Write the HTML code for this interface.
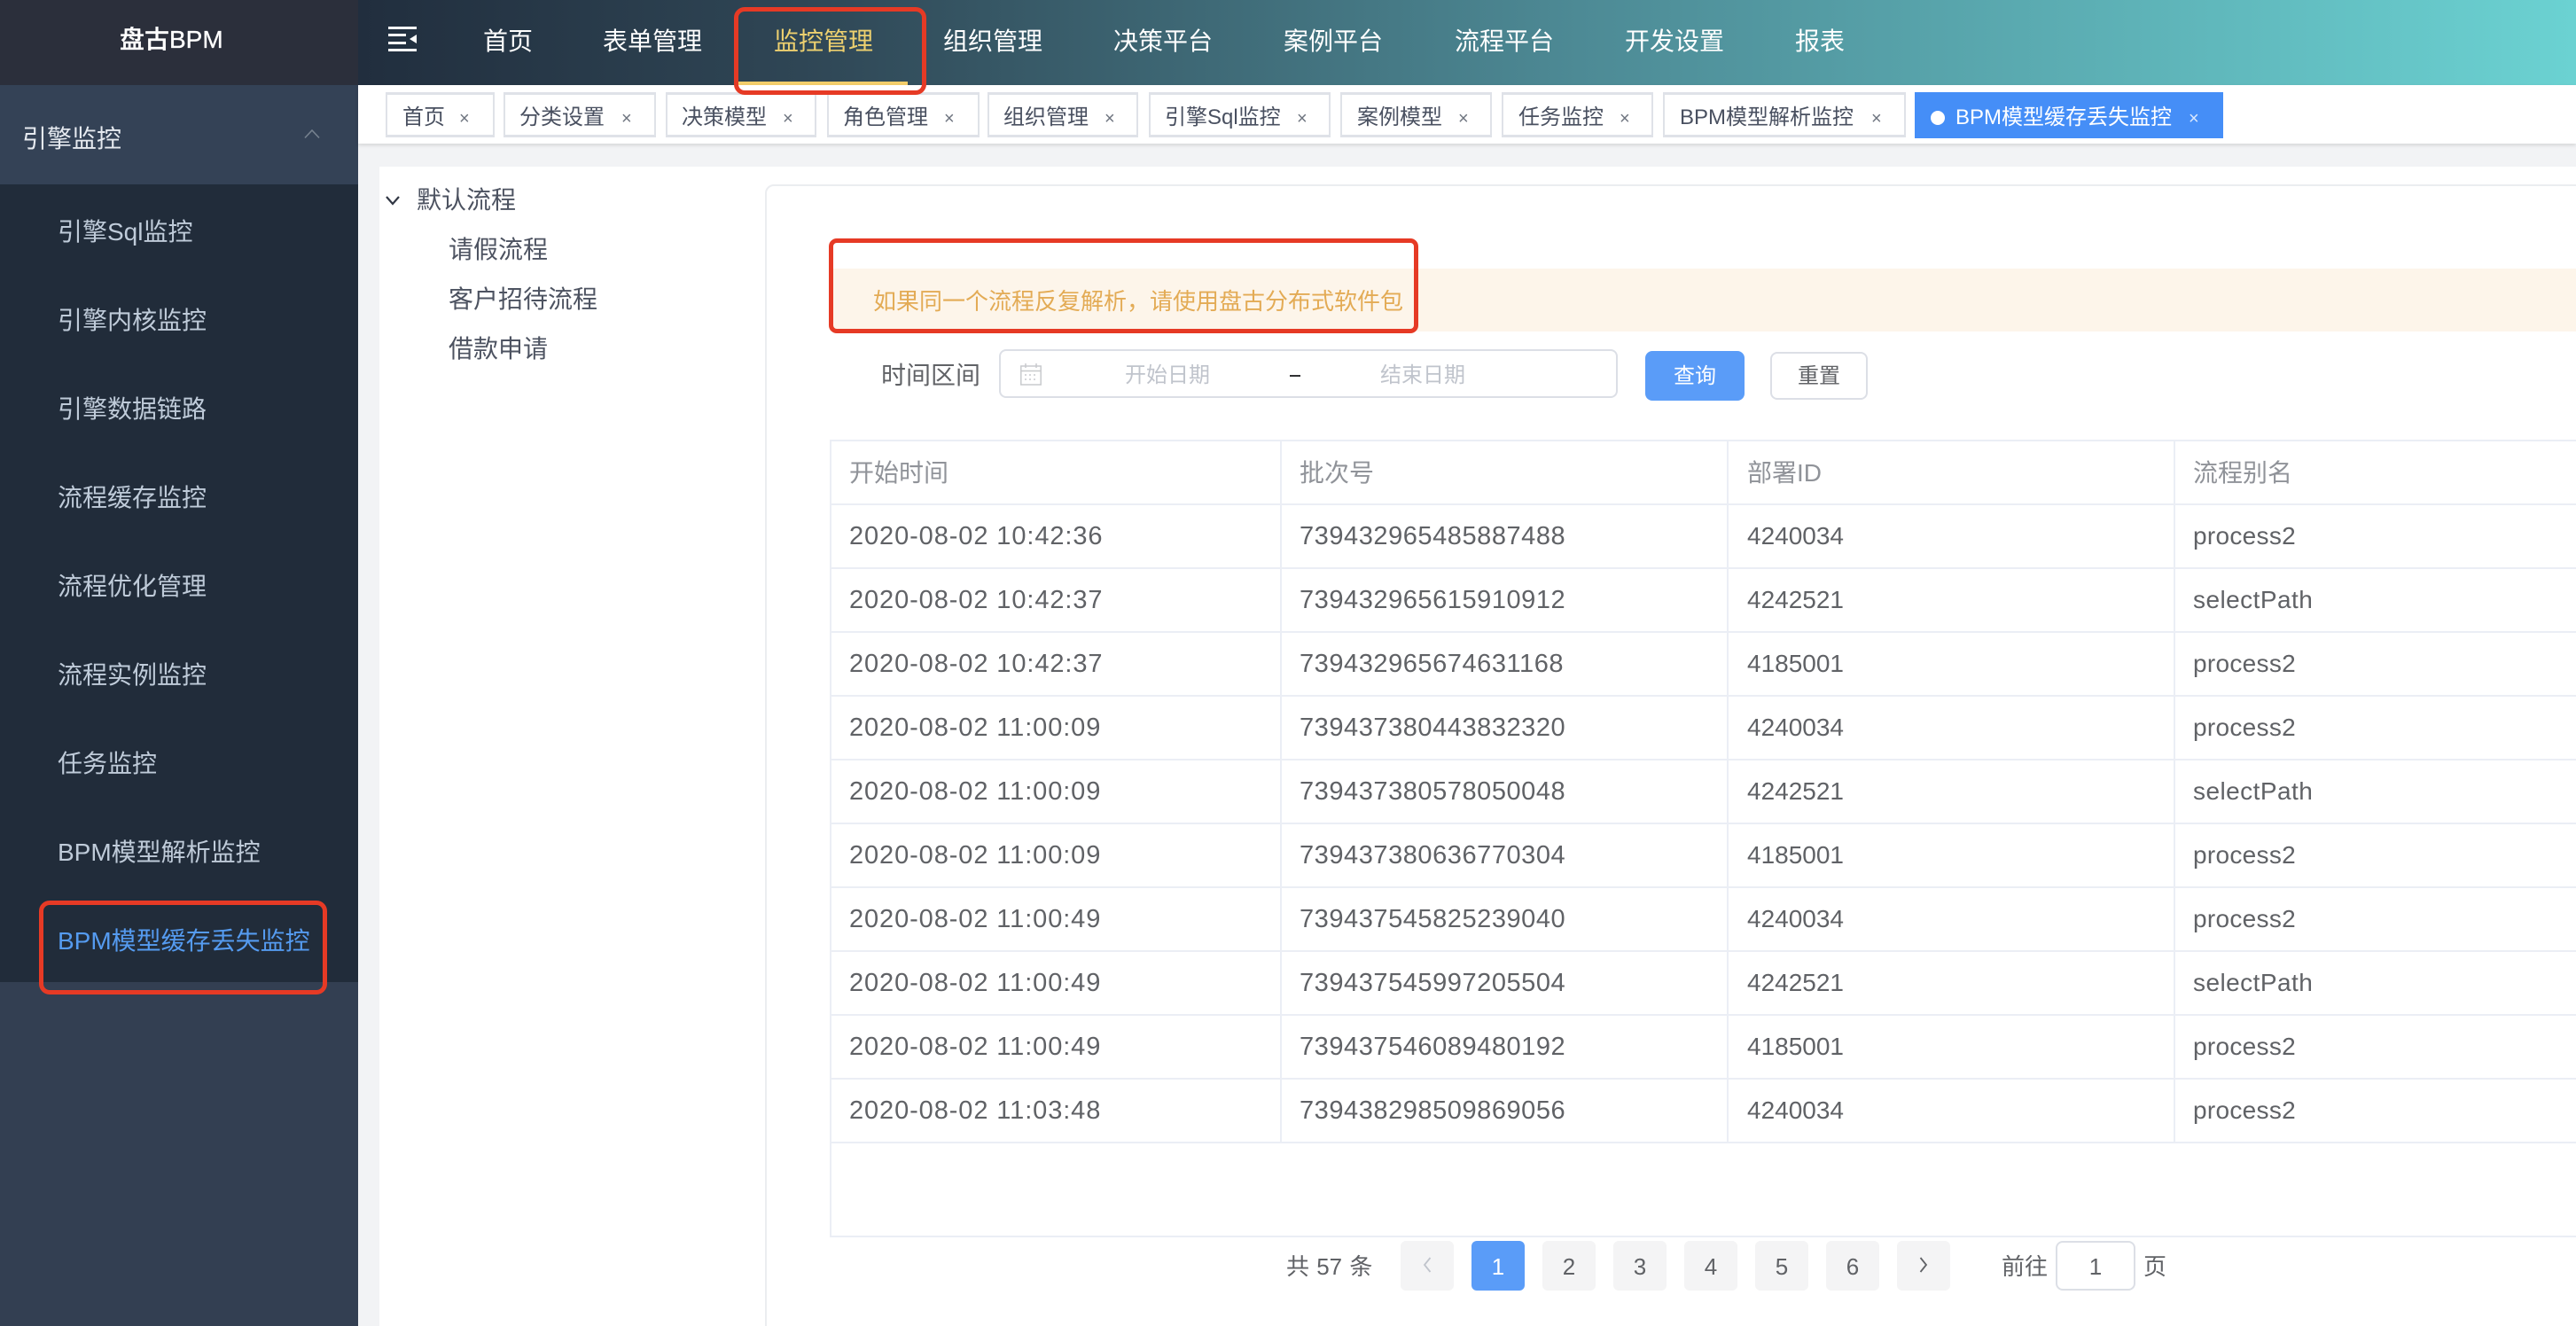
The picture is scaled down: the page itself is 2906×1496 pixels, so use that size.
<!DOCTYPE html>
<html lang="zh-CN"><head><meta charset="utf-8"><title>盘古BPM</title>
<style>
html,body{margin:0;padding:0;width:2906px;height:1496px;overflow:hidden;background:#fff}
body{position:relative;font-family:"Liberation Sans","Noto Sans CJK SC",sans-serif;color:#606266}
.a,.t,.tab,.red,.pg{position:absolute;box-sizing:border-box}
.t{white-space:nowrap;line-height:40px;height:40px;font-size:28px}
.nav{color:#fff;top:27px}
.mi{left:65px;color:#bfcbd9}
.tab{top:104px;height:51px;background:#fff;border:2px solid #dfe2e8;border-bottom-width:3px;border-top-width:3px}
.tt{font-size:24px;top:113px;color:#495060}
.x{font-size:20px;top:114px;color:#6f7580}
.tree{color:#4d5361}
.h{top:514px;color:#909399}
.hl{position:absolute;left:936px;width:1970px;height:2px;background:#ebeef5}
.vl{position:absolute;top:497px;width:2px;height:792px;background:#ebeef5}
.c1{left:958px;font-size:29px;letter-spacing:.9px}.c2{left:1466px;font-size:29px;letter-spacing:.55px}.c3{left:1971px}.c4{left:2474px;letter-spacing:.3px}
.pg{top:1400px;width:60px;height:56px;background:#f4f4f5;border-radius:6px;text-align:center;line-height:58px;font-size:26px;color:#606266}
.pg svg{display:block;margin:18px auto 0}
.red{border:5px solid #e63a25;border-radius:12px}
</style></head><body>

<!-- header -->
<div class="a" style="left:404px;top:0;width:2502px;height:96px;background:linear-gradient(90deg,#212e3e 0%,#2f4655 20%,#4d8a95 55%,#6bd2d2 100%)"></div>
<div class="a" style="left:0;top:0;width:404px;height:96px;background:#2b2f3b"></div>
<div class="t" style="left:135px;top:25px;color:#fff;font-weight:500;-webkit-text-stroke:.3px #fff">盘古BPM</div>
<svg class="a" style="left:438px;top:30px" width="32" height="28" viewBox="0 0 32 28"><path fill="#fff" d="M0 0h32v3H0zM0 8h20v3H0zM0 17h20v3H0zM0 25h32v3H0zM32 9v10l-8-5z"/></svg>
<div class="t nav" style="left:545px">首页</div>
<div class="t nav" style="left:680px">表单管理</div>
<div class="t nav" style="left:873px;color:#edd06f">监控管理</div>
<div class="a" style="left:833px;top:92px;width:191px;height:4px;background:#f3ce6b"></div>
<div class="t nav" style="left:1064px">组织管理</div>
<div class="t nav" style="left:1256px">决策平台</div>
<div class="t nav" style="left:1448px">案例平台</div>
<div class="t nav" style="left:1641px">流程平台</div>
<div class="t nav" style="left:1833px">开发设置</div>
<div class="t nav" style="left:2025px">报表</div>

<!-- sidebar -->
<div class="a" style="left:0;top:96px;width:404px;height:1400px;background:#333f52"></div>
<div class="a" style="left:0;top:96px;width:404px;height:112px;background:#344256"></div>
<div class="a" style="left:0;top:208px;width:404px;height:900px;background:#212c3a"></div>
<div class="t" style="left:25px;top:137px;color:#e6eaf0">引擎监控</div>
<svg class="a" style="left:343px;top:145px" width="18" height="12" viewBox="0 0 18 12"><path d="M1 10.500L9 2l8 8.500" fill="none" stroke="#76828f" stroke-width="1.600"/></svg>
<div class="t mi" style="top:242px">引擎Sql监控</div>
<div class="t mi" style="top:342px">引擎内核监控</div>
<div class="t mi" style="top:442px">引擎数据链路</div>
<div class="t mi" style="top:542px">流程缓存监控</div>
<div class="t mi" style="top:642px">流程优化管理</div>
<div class="t mi" style="top:742px">流程实例监控</div>
<div class="t mi" style="top:842px">任务监控</div>
<div class="t mi" style="top:942px">BPM模型解析监控</div>
<div class="t mi" style="top:1042px;color:#559bf0">BPM模型缓存丢失监控</div>

<!-- main background -->
<div class="a" style="left:404px;top:96px;width:2502px;height:1400px;background:#f2f3f5"></div>
<div class="a" style="left:404px;top:96px;width:2502px;height:66px;background:#fff;box-shadow:0 2px 4px rgba(0,0,0,.12)"></div>

<!-- tabs -->
<div class="tab" style="left:435px;width:123px"></div><div class="t tt" style="left:454px">首页</div><div class="t x" style="left:518px">×</div>
<div class="tab" style="left:568px;width:172px"></div><div class="t tt" style="left:586px">分类设置</div><div class="t x" style="left:701px">×</div>
<div class="tab" style="left:751px;width:170px"></div><div class="t tt" style="left:769px">决策模型</div><div class="t x" style="left:883px">×</div>
<div class="tab" style="left:933px;width:172px"></div><div class="t tt" style="left:951px">角色管理</div><div class="t x" style="left:1065px">×</div>
<div class="tab" style="left:1114px;width:170px"></div><div class="t tt" style="left:1132px">组织管理</div><div class="t x" style="left:1246px">×</div>
<div class="tab" style="left:1296px;width:205px"></div><div class="t tt" style="left:1314px">引擎Sql监控</div><div class="t x" style="left:1463px">×</div>
<div class="tab" style="left:1512px;width:171px"></div><div class="t tt" style="left:1531px">案例模型</div><div class="t x" style="left:1645px">×</div>
<div class="tab" style="left:1694px;width:171px"></div><div class="t tt" style="left:1713px">任务监控</div><div class="t x" style="left:1827px">×</div>
<div class="tab" style="left:1876px;width:274px"></div><div class="t tt" style="left:1895px">BPM模型解析监控</div><div class="t x" style="left:2111px">×</div>
<div class="a" style="left:2160px;top:104px;width:348px;height:52px;background:#458ef7"></div>
<div class="a" style="left:2178px;top:125px;width:16px;height:16px;border-radius:50%;background:#fff"></div>
<div class="t tt" style="left:2206px;color:#fff">BPM模型缓存丢失监控</div><div class="t x" style="left:2469px;color:#dbe8fd">×</div>

<!-- panel -->
<div class="a" style="left:428px;top:188px;width:2478px;height:1308px;background:#fff"></div>
<svg class="a" style="left:435px;top:220px" width="16" height="12" viewBox="0 0 16 12"><path d="M1 2l7 8 7-8" fill="none" stroke="#303643" stroke-width="2.200"/></svg>
<div class="t tree" style="left:470px;top:206px">默认流程</div>
<div class="t tree" style="left:506px;top:262px">请假流程</div>
<div class="t tree" style="left:506px;top:318px">客户招待流程</div>
<div class="t tree" style="left:506px;top:374px">借款申请</div>

<!-- card -->
<div class="a" style="left:863px;top:208px;width:2100px;height:1320px;border:2px solid #ebedf0;border-radius:10px"></div>
<div class="a" style="left:936px;top:303px;width:1970px;height:71px;background:#fdf5ea"></div>
<div class="t" style="left:985px;top:320px;font-size:26px;color:#e3ab55">如果同一个流程反复解析，请使用盘古分布式软件包</div>

<!-- filter -->
<div class="t" style="left:994px;top:404px">时间区间</div>
<div class="a" style="left:1127px;top:394px;width:698px;height:55px;border:2px solid #dcdfe6;border-radius:8px;background:#fff"></div>
<svg class="a" style="left:1151px;top:409px" width="24" height="26" viewBox="0 0 24 26"><g fill="none" stroke="#c8cacd" stroke-width="1.500"><rect x=".8" y="4" width="22.400" height="21"/><path d="M.8 9.500h22.400M6 1v5M18 1v5"/></g><path stroke="#c8cacd" stroke-width="1.500" stroke-dasharray="2 3" d="M5 14h15M5 19h15"/></svg>
<div class="t" style="left:1269px;top:404px;font-size:24px;color:#c0c4cc">开始日期</div>
<div class="a" style="left:1455px;top:423px;width:12px;height:2px;background:#303133"></div>
<div class="t" style="left:1557px;top:404px;font-size:24px;color:#c0c4cc">结束日期</div>
<div class="a" style="left:1856px;top:396px;width:112px;height:56px;background:#5a9cf8;border-radius:8px;color:#fff;font-size:24px;line-height:58px;text-align:center">查询</div>
<div class="a" style="left:1997px;top:397px;width:110px;height:54px;border:2px solid #dcdfe6;border-radius:8px;background:#fff;color:#606266;font-size:24px;line-height:52px;text-align:center">重置</div>

<!-- table -->
<div class="hl" style="top:496px"></div>
<div class="hl" style="top:568px"></div><div class="hl" style="top:640px"></div><div class="hl" style="top:712px"></div><div class="hl" style="top:784px"></div><div class="hl" style="top:856px"></div><div class="hl" style="top:928px"></div><div class="hl" style="top:1000px"></div><div class="hl" style="top:1072px"></div><div class="hl" style="top:1144px"></div><div class="hl" style="top:1216px"></div><div class="hl" style="top:1288px"></div>
<div class="hl" style="top:1394px"></div>
<div class="vl" style="left:936px;height:899px"></div>
<div class="vl" style="left:1444px"></div><div class="vl" style="left:1948px"></div><div class="vl" style="left:2452px"></div>

<div class="t h" style="left:958px">开始时间</div><div class="t h" style="left:1466px">批次号</div><div class="t h" style="left:1971px">部署ID</div><div class="t h" style="left:2474px">流程别名</div>

<div class="t c1" style="top:585px">2020-08-02 10:42:36</div><div class="t c2" style="top:585px">739432965485887488</div><div class="t c3" style="top:585px">4240034</div><div class="t c4" style="top:585px">process2</div>
<div class="t c1" style="top:657px">2020-08-02 10:42:37</div><div class="t c2" style="top:657px">739432965615910912</div><div class="t c3" style="top:657px">4242521</div><div class="t c4" style="top:657px;letter-spacing:.45px">selectPath</div>
<div class="t c1" style="top:729px">2020-08-02 10:42:37</div><div class="t c2" style="top:729px">739432965674631168</div><div class="t c3" style="top:729px">4185001</div><div class="t c4" style="top:729px">process2</div>
<div class="t c1" style="top:801px">2020-08-02 11:00:09</div><div class="t c2" style="top:801px">739437380443832320</div><div class="t c3" style="top:801px">4240034</div><div class="t c4" style="top:801px">process2</div>
<div class="t c1" style="top:873px">2020-08-02 11:00:09</div><div class="t c2" style="top:873px">739437380578050048</div><div class="t c3" style="top:873px">4242521</div><div class="t c4" style="top:873px;letter-spacing:.45px">selectPath</div>
<div class="t c1" style="top:945px">2020-08-02 11:00:09</div><div class="t c2" style="top:945px">739437380636770304</div><div class="t c3" style="top:945px">4185001</div><div class="t c4" style="top:945px">process2</div>
<div class="t c1" style="top:1017px">2020-08-02 11:00:49</div><div class="t c2" style="top:1017px">739437545825239040</div><div class="t c3" style="top:1017px">4240034</div><div class="t c4" style="top:1017px">process2</div>
<div class="t c1" style="top:1089px">2020-08-02 11:00:49</div><div class="t c2" style="top:1089px">739437545997205504</div><div class="t c3" style="top:1089px">4242521</div><div class="t c4" style="top:1089px;letter-spacing:.45px">selectPath</div>
<div class="t c1" style="top:1161px">2020-08-02 11:00:49</div><div class="t c2" style="top:1161px">739437546089480192</div><div class="t c3" style="top:1161px">4185001</div><div class="t c4" style="top:1161px">process2</div>
<div class="t c1" style="top:1233px">2020-08-02 11:03:48</div><div class="t c2" style="top:1233px">739438298509869056</div><div class="t c3" style="top:1233px">4240034</div><div class="t c4" style="top:1233px">process2</div>

<!-- pagination -->
<div class="t" style="left:1451px;top:1409px;font-size:26px;word-spacing:1px">共 57 条</div>
<div class="pg" style="left:1580px"><svg width="10" height="18" viewBox="0 0 10 18"><path d="M8.500 1L2 9l6.500 8" fill="none" stroke="#c0c4cc" stroke-width="1.800"/></svg></div>
<div class="pg" style="left:1660px;background:#5a9cf8;color:#fff">1</div>
<div class="pg" style="left:1740px">2</div>
<div class="pg" style="left:1820px">3</div>
<div class="pg" style="left:1900px">4</div>
<div class="pg" style="left:1980px">5</div>
<div class="pg" style="left:2060px">6</div>
<div class="pg" style="left:2140px"><svg width="10" height="18" viewBox="0 0 10 18"><path d="M1.500 1L8 9l-6.500 8" fill="none" stroke="#606266" stroke-width="1.800"/></svg></div>
<div class="t" style="left:2258px;top:1409px;font-size:26px">前往</div>
<div class="a" style="left:2319px;top:1400px;width:90px;height:56px;border:2px solid #dcdfe6;border-radius:8px;background:#fff;text-align:center;font-size:26px;line-height:54px">1</div>
<div class="t" style="left:2418px;top:1409px;font-size:26px">页</div>

<!-- red annotations -->
<div class="red" style="left:828px;top:8px;width:217px;height:99px"></div>
<div class="red" style="left:44px;top:1016px;width:325px;height:106px"></div>
<div class="red" style="left:935px;top:269px;width:665px;height:107px;border-radius:9px"></div>
</body></html>
